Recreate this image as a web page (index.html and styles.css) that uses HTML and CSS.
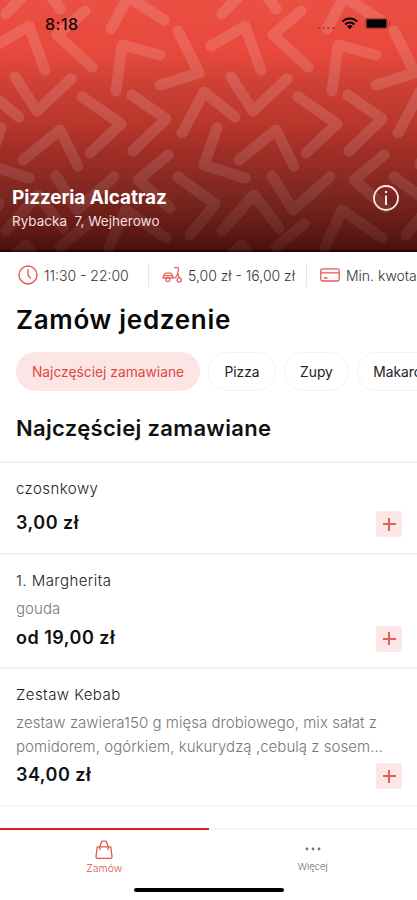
FILE: index.html
```html
<!DOCTYPE html>
<html lang="pl">
<head>
<meta charset="utf-8">
<title>Pizzeria Alcatraz</title>
<link rel="stylesheet" href="styles.css">
</head>
<body>
<div class="app">
  <header class="hero">
    <svg class="pattern" width="417" height="252" viewBox="0 0 417 252">
      <defs>
        <g id="tile" fill="none" stroke="#fff" stroke-opacity=".135" stroke-width="11" stroke-linecap="round" stroke-linejoin="round">
          <path d="M6 14 22-3M48-8 60 9M-5 46 29 26 45 70M85 11 57 35 92 67M111 29 128-3 164 20M178 31 199 73 160 85M116 91 122 45 160 55M15 77 37 111 71 79"/>
          <path d="M182 133 204 92 235 117M217 128 204 165 245 178M82 97 121 124 90 153M132 95 166 119 133 151M23 160 60 130 78 166"/>
          <path d="M168 155 138 180 170 208M56 176 77 210 114 177M6 231 38 195 63 228M109 247 126 210 166 238M178 177 215 204 190 235M88 224 60 247M10 259 26 245 35 259"/>
        </g>
      </defs>
      <use href="#tile" x="-216"/><use href="#tile"/><use href="#tile" x="216"/>
    </svg>
    <div class="status">
      <span class="time">8:18</span>
      <svg width="74" height="14" viewBox="0 0 74 14">
        <g fill="#a8352b"><circle cx="1.8" cy="11" r="1.1"/><circle cx="6.6" cy="11" r="1.1"/><circle cx="11.4" cy="11" r="1.1"/><circle cx="16.2" cy="11" r="1.1"/></g>
        <g fill="none" stroke="#120504" stroke-width="2"><path d="M25.4 4.6a10.4 10.4 0 0 1 14.8 0M28.2 7.5a6.5 6.5 0 0 1 9.2 0"/></g>
        <path d="M30 9.3a4 4 0 0 1 5.6 0L32.8 12.2Z" fill="#120504"/>
        <rect x="48.5" y="1.3" width="22" height="10.4" rx="2.5" fill="none" stroke="#a8352b" stroke-width=".8"/>
        <rect x="49.6" y="2.3" width="19.8" height="8.4" rx="1" fill="#000"/>
        <path d="M72 4.7q2 1.8 0 3.6" fill="#7d2a22"/>
      </svg>
    </div>
    <div class="place">
      <div>
        <h1>Pizzeria Alcatraz</h1>
        <p class="address">Rybacka&nbsp; 7, Wejherowo</p>
      </div>
      <svg class="info" width="28" height="28" viewBox="0 0 28 28" fill="none" stroke="#f9e6e4"><circle cx="14" cy="14" r="12" stroke-width="1.8"/><path d="M14 11.5V21" stroke-width="2"/><circle cx="14" cy="8" r=".6" stroke-width="1.2"/></svg>
    </div>
  </header>

  <div class="facts">
    <div class="fact hours">
      <svg width="20" height="20" viewBox="0 0 20 20" fill="none" stroke="#e45a50" stroke-width="1.4"><circle cx="10" cy="10" r="9"/><path d="M10 4.6V10l2.3 3.2" stroke-linecap="round"/></svg>
      <span>11:30 - 22:00</span>
    </div>
    <div class="fact delivery">
      <svg width="20" height="18" viewBox="0 0 20 18" fill="none" stroke="#e8675e" stroke-width="1.3" stroke-linecap="round" stroke-linejoin="round"><path d="M12.500 1.600h2.500q1.800 0 1.600 1.600L15.600 7l1.600 5M15.600 7q-.4 5-4.600 5H1q0-3 2.500-4.800h5.500q2 1.600 2 4.800M1.500 9.600h9"/><circle cx="5.800" cy="13.600" r="2.100"/><circle cx="17.200" cy="14" r="2.100"/></svg>
      <span>5,00 zł - 16,00 zł</span>
    </div>
    <div class="fact minimum">
      <svg width="20" height="14" viewBox="0 0 20 14" fill="none" stroke="#e45a50" stroke-width="1.3"><rect x=".8" y=".8" width="18.400" height="12.200" rx="1.800"/><path d="M1 4.800h18M4 10h3.500"/></svg>
      <span>Min. kwota</span>
    </div>
  </div>

  <h2 class="title">Zamów jedzenie</h2>

  <nav class="chips">
    <span class="chip active">Najczęściej zamawiane</span>
    <span class="chip pizza">Pizza</span>
    <span class="chip soup">Zupy</span>
    <span class="chip pasta">Makarony</span>
  </nav>

  <h3 class="section">Najczęściej zamawiane</h3>

  <main class="menu">
    <article class="dish garlic">
      <div class="name">czosnkowy</div>
      <div class="buy"><b>3,00 zł</b><span class="add"></span></div>
    </article>
    <article class="dish margherita">
      <div class="name">1. Margherita</div>
      <div class="desc">gouda</div>
      <div class="buy"><b>od 19,00 zł</b><span class="add"></span></div>
    </article>
    <article class="dish kebab">
      <div class="name">Zestaw Kebab</div>
      <div class="desc">zestaw zawiera150 g mięsa drobiowego, mix sałat z<br>pomidorem, ogórkiem, kukurydzą ,cebulą z sosem...</div>
      <div class="buy"><b>34,00 zł</b><span class="add"></span></div>
    </article>
    <div class="rest"></div>
  </main>

  <footer class="tabs">
    <div class="tab order">
      <svg width="20" height="20" viewBox="0 0 20 20" fill="none" stroke="#e3564e" stroke-width="1.300" stroke-linejoin="round" stroke-linecap="round"><path d="M3.200 6.800h13.600l1.200 9.700q.1 1.900-1.600 1.900H3.600q-1.700 0-1.600-1.900zM6 9.500V6L7.400 2.200q.4-1 1.400-1h2.400q1 0 1.400 1L14 6v3.500"/></svg>
      <span>Zamów</span>
    </div>
    <div class="tab more">
      <svg width="18" height="6" viewBox="0 0 18 6" fill="#777"><circle cx="3" cy="3" r="1.400"/><circle cx="9" cy="3" r="1.400"/><circle cx="15" cy="3" r="1.400"/></svg>
      <span>Więcej</span>
    </div>
    <div class="home"></div>
  </footer>
</div>
</body>
</html>
```
FILE: styles.css
```css
* { box-sizing: border-box; margin: 0; padding: 0; }
body { background: #fff; font-family: Inter, "Liberation Sans", sans-serif; color: #111; }
.app { width: 417px; height: 900px; overflow: hidden; display: flex; flex-direction: column; white-space: nowrap; }
svg { display: block; flex: none; }

.hero {
  position: relative; height: 252px; flex: none; display: flex; flex-direction: column; justify-content: space-between;
  background: linear-gradient(#ea5043 0, #e8493c 50px, #cf4135 82px, #b8362b 125px, #a12f27 150px, #7d2620 195px, #5c1813 235px, #4a100d 250px, #250504 250px);
}
.pattern { position: absolute; inset: 0; -webkit-mask-image: linear-gradient(#000 50%, rgba(0,0,0,.4)); mask-image: linear-gradient(#000 50%, rgba(0,0,0,.4)); }
.status { position: relative; display: flex; justify-content: space-between; align-items: center; padding: 14px 26px 0 45px; height: 34px; }
.time { font-size: 16px; font-weight: 500; line-height: 20px; letter-spacing: .5px; color: #180504; }
.place { position: relative; display: flex; justify-content: space-between; padding: 0 17px 22px 12px; }
h1 { font-size: 19px; line-height: 24px; font-weight: 700; letter-spacing: -.12px; color: #fff; }
.address { margin-top: 2px; font-size: 13.500px; line-height: 18px; color: #f4dfdd; }
.info { margin-top: -2px; }

.facts { display: flex; flex: none; height: 46px; align-items: center; padding-left: 18px; font-size: 14px; font-weight: 300; color: #333; }
.fact { display: flex; align-items: center; height: 24px; flex: none; }
.hours { gap: 6px; width: 131px; border-right: 1px solid #e5e5e5; }
.delivery { gap: 6px; width: 158px; padding-left: 13px; border-right: 1px solid #e5e5e5; }
.minimum { gap: 6px; padding-left: 13px; }

.title { height: 54px; line-height: 43px; padding-left: 16px; font-size: 26px; font-weight: 600; letter-spacing: .7px; color: #080808; flex: none; }
.chips { display: flex; flex: none; gap: 8px; padding-left: 16px; height: 39px; font-size: 13.800px; }
.chip { flex: none; height: 39px; border: 1px solid #f3f3f3; border-radius: 20px; display: flex; align-items: center; justify-content: center; color: #222; }
.active { width: 184px; background: #fbe6e5; border-color: #fbe6e5; color: #e2483e; }
.pizza { width: 68px; }
.soup { width: 65px; }
.pasta { width: 97px; }
.section { flex: none; height: 70px; padding: 22px 0 0 16px; line-height: 30px; font-size: 22px; font-weight: 600; letter-spacing: .33px; color: #111; }

.menu { flex: 1; min-height: 0; }
.dish { border-top: 2px solid #f1f1f1; padding: 15px 15px 0 16px; }
.garlic { height: 92px; }
.margherita { height: 114px; }
.kebab { height: 138px; }
.rest { border-top: 2px solid #f5f5f5; }
.name { height: 22px; line-height: 22px; font-size: 15px; font-weight: 300; letter-spacing: .45px; color: #222; }
.desc { margin-top: 5px; line-height: 23.500px; font-size: 15px; font-weight: 300; letter-spacing: .04px; color: #777; }
.buy { display: flex; align-items: center; justify-content: space-between; height: 26px; margin-top: 11px; }
.margherita .buy, .kebab .buy { margin-top: 5px; }
.buy b { margin-top: -3px; font-size: 18px; font-weight: 600; letter-spacing: .5px; color: #111; }
.add { width: 26px; height: 26px; border-radius: 3px; background: linear-gradient(#e0605a, #e0605a) center / 13px 2px no-repeat, linear-gradient(#e0605a, #e0605a) center / 2px 13px no-repeat, #fce7e6; }

.tabs { flex: none; height: 72px; position: relative; display: flex; background: #fff; }
.tab { display: flex; flex-direction: column; align-items: center; width: 208.500px; border-top: 2px solid #f5f5f5; font-size: 10.500px; font-weight: 300; }
.order { border-top-color: #d91d20; color: #e3564e; padding-top: 10px; gap: 2px; }
.more { color: #666; padding-top: 16px; gap: 9px; font-size: 9.500px; }
.home { position: absolute; left: 134px; top: 60px; width: 150px; height: 4px; border-radius: 2px; background: #000; }
```
